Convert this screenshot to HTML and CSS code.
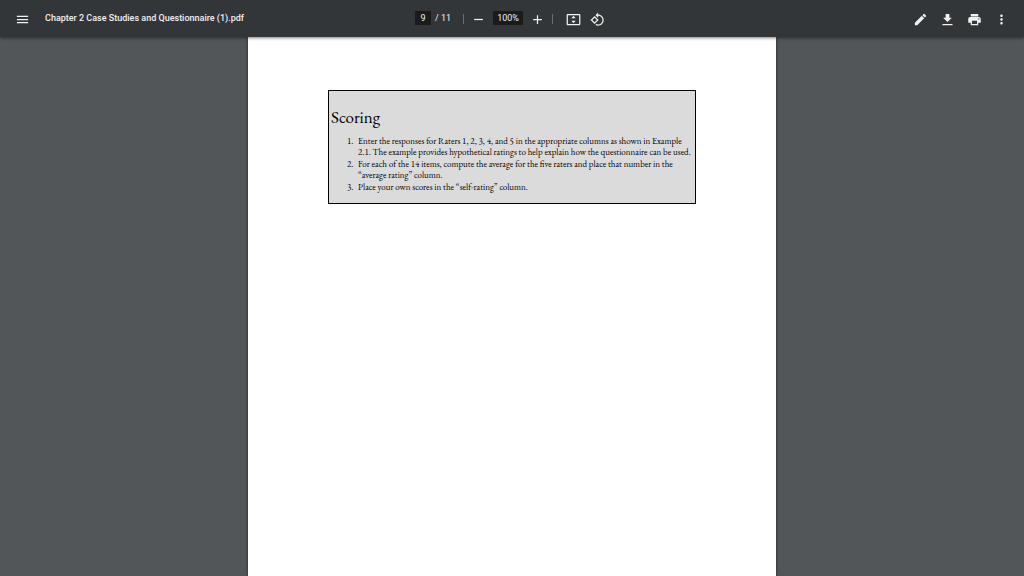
FILE: index.html
```html
<!DOCTYPE html>
<html lang="en">
<head>
<meta charset="utf-8">
<meta name="viewport" content="width=device-width, initial-scale=1">
<title>Chapter 2 Case Studies and Questionnaire (1).pdf</title>
<link rel="stylesheet" href="styles.css">
</head>
<body>
<header class="toolbar">
  <div class="toolbar-start">
    <button class="icon-button" type="button" aria-label="Menu"><svg viewBox="0 0 24 24"><path d="M3 18h18v-2H3v2zm0-5h18v-2H3v2zm0-7v2h18V6H3z"/></svg></button>
    <h1 class="file-name">Chapter 2 Case Studies and Questionnaire (1).pdf</h1>
  </div>
  <div class="toolbar-center">
    <div class="page-selector">
      <input class="field page-field" type="text" value="9" aria-label="Page number">
      <span class="page-total">/ 11</span>
    </div>
    <span class="divider"></span>
    <div class="zoom-controls">
      <button class="icon-button" type="button" aria-label="Zoom out"><svg viewBox="0 0 24 24"><path d="M5 11h14v2H5z"/></svg></button>
      <input class="field zoom-field" type="text" value="100%" aria-label="Zoom level">
      <button class="icon-button" type="button" aria-label="Zoom in"><svg viewBox="0 0 24 24"><path d="M19 13h-6v6h-2v-6H5v-2h6V5h2v6h6v2z"/></svg></button>
    </div>
    <span class="divider"></span>
    <div class="view-controls">
      <button class="icon-button" type="button" aria-label="Fit to page"><svg viewBox="0 0 24 24"><path d="M21 3H3c-1.100 0-2 .9-2 2v14c0 1.100.9 2 2 2h18c1.100 0 2-.9 2-2V5c0-1.100-.9-2-2-2zm0 16H3V5h18v14zM12 6l-3.500 4h7L12 6zm0 12l3.500-4h-7L12 18z"/></svg></button>
      <button class="icon-button" type="button" aria-label="Rotate counterclockwise"><svg viewBox="0 0 24 24"><path d="M7.340 6.410L.86 12.900l6.490 6.480 6.490-6.480-6.500-6.490zM3.690 12.900l3.660-3.660L11 12.900l-3.660 3.660-3.650-3.660zm15.670-6.260C17.610 4.880 15.300 4 13 4V.76L8.760 5 13 9.240V6c1.790 0 3.580.68 4.950 2.050 2.730 2.730 2.730 7.170 0 9.900C16.580 19.320 14.790 20 13 20c-.97 0-1.940-.21-2.840-.61l-1.490 1.490C10.020 21.620 11.510 22 13 22c2.300 0 4.610-.88 6.360-2.640 3.520-3.510 3.520-9.210 0-12.720z"/></svg></button>
    </div>
  </div>
  <div class="toolbar-end">
    <button class="icon-button" type="button" aria-label="Annotate"><svg viewBox="0 0 24 24"><path d="M3 17.250V21h3.750L17.810 9.940l-3.750-3.750L3 17.250zM20.710 7.040c.39-.39.39-1.020 0-1.410l-2.340-2.340c-.39-.39-1.020-.39-1.410 0l-1.830 1.830 3.750 3.750 1.830-1.830z"/></svg></button>
    <button class="icon-button" type="button" aria-label="Download"><svg viewBox="0 0 24 24"><path d="M19 9h-4V3H9v6H5l7 7 7-7zM4 19v2h16v-2H4z"/></svg></button>
    <button class="icon-button" type="button" aria-label="Print"><svg viewBox="0 0 24 24"><path d="M19 8H5c-1.660 0-3 1.340-3 3v6h4v4h12v-4h4v-6c0-1.660-1.340-3-3-3zm-3 11H8v-5h8v5zm3-7c-.55 0-1-.45-1-1s.45-1 1-1 1 .45 1 1-.45 1-1 1zm-1-9H6v4h12V3z"/></svg></button>
    <button class="icon-button" type="button" aria-label="More actions"><svg viewBox="0 0 24 24"><path d="M12 8c1.100 0 2-.9 2-2s-.9-2-2-2-2 .9-2 2 .9 2 2 2zm0 2c-1.100 0-2 .9-2 2s.9 2 2 2 2-.9 2-2-.9-2-2-2zm0 6c-1.100 0-2 .9-2 2s.9 2 2 2 2-.9 2-2-.9-2-2-2z"/></svg></button>
  </div>
</header>
<main class="viewer">
  <article class="page">
    <section class="scoring">
      <h2 class="scoring-title">Scoring</h2>
      <ol class="scoring-steps">
        <li class="step"><span>Enter the responses for Raters 1, 2, 3, 4, and 5 in the appropriate columns as shown in Example<br>2.1. The example provides hypothetical ratings to help explain how the questionnaire can be used.</span></li>
        <li class="step"><span>For each of the 14 items, compute the average for the five raters and place that number in the<br>“average rating” column.</span></li>
        <li class="step"><span>Place your own scores in the “self-rating” column.</span></li>
      </ol>
    </section>
  </article>
</main>
</body>
</html>
```
FILE: styles.css
```css
* {
  box-sizing: border-box;
}

body {
  display: flex;
  flex-direction: column;
  min-height: 100vh;
  margin: 0;
  background: #525659;
  font-family: Roboto, "Liberation Sans", sans-serif;
}

.toolbar {
  position: relative;
  z-index: 1;
  display: grid;
  grid-template-columns: 1fr auto 1fr;
  align-items: center;
  padding: 9px 15px 8px;
  background: #323639;
  box-shadow: 0 1px 3px rgba(0, 0, 0, 0.5);
  color: #f1f1f1;
}

.toolbar-start,
.toolbar-center,
.toolbar-end,
.page-selector,
.zoom-controls,
.view-controls {
  display: flex;
  align-items: center;
}

.toolbar-start {
  gap: 15px;
}

.toolbar-center {
  gap: 7px;
  padding-right: 4px;
}

.toolbar-end {
  justify-content: flex-end;
  gap: 12px;
}

.page-selector {
  gap: 4px;
  margin-right: 5px;
}

.zoom-controls {
  gap: 7px;
}

.view-controls {
  gap: 9px;
  margin-left: 6px;
}

.icon-button {
  display: flex;
  padding: 0;
  border: 0;
  background: none;
  color: inherit;
}

.icon-button svg {
  width: 15px;
  height: 15px;
  fill: currentColor;
}

.file-name {
  margin: 0;
  padding-bottom: 2px;
  font-size: 9px;
  font-weight: 500;
  line-height: 18px;
  white-space: nowrap;
}

.field {
  height: 14px;
  margin: 0 0 2px;
  padding: 0;
  border: 0;
  background: #191b1c;
  color: inherit;
  font: 9px/14px Roboto, "Liberation Sans", sans-serif;
  text-align: center;
}

.page-field {
  width: 16px;
}

.zoom-field {
  width: 30px;
}

.page-total {
  margin-bottom: 2px;
  font-size: 9px;
  line-height: 14px;
}

.divider {
  width: 1px;
  height: 10px;
  background: #6b6e70;
}

.viewer {
  display: flex;
  flex: 1;
  justify-content: center;
}

.page {
  width: 100%;
  max-width: 528px;
  padding: 53px 80px;
  background: #fff;
  box-shadow: 0 0 3px rgba(0, 0, 0, 0.6);
}

.scoring {
  padding: 16px 2px 9px;
  border: 1px solid #000;
  background: #dbdbdb;
  color: #000;
  font-family: "EB Garamond", Garamond, "Liberation Serif", serif;
}

.scoring-title {
  margin: 0 0 9px;
  font-size: 17px;
  font-weight: 400;
  line-height: 20px;
}

.scoring-steps {
  margin: 0;
  padding: 0 0 0 16px;
  counter-reset: step;
  font-size: 9px;
  line-height: 11px;
  list-style: none;
  white-space: nowrap;
}

.step {
  display: grid;
  grid-template-columns: 11px auto;
  padding-bottom: 1px;
  counter-increment: step;
}

.step::before {
  content: counter(step) ".";
}
```
